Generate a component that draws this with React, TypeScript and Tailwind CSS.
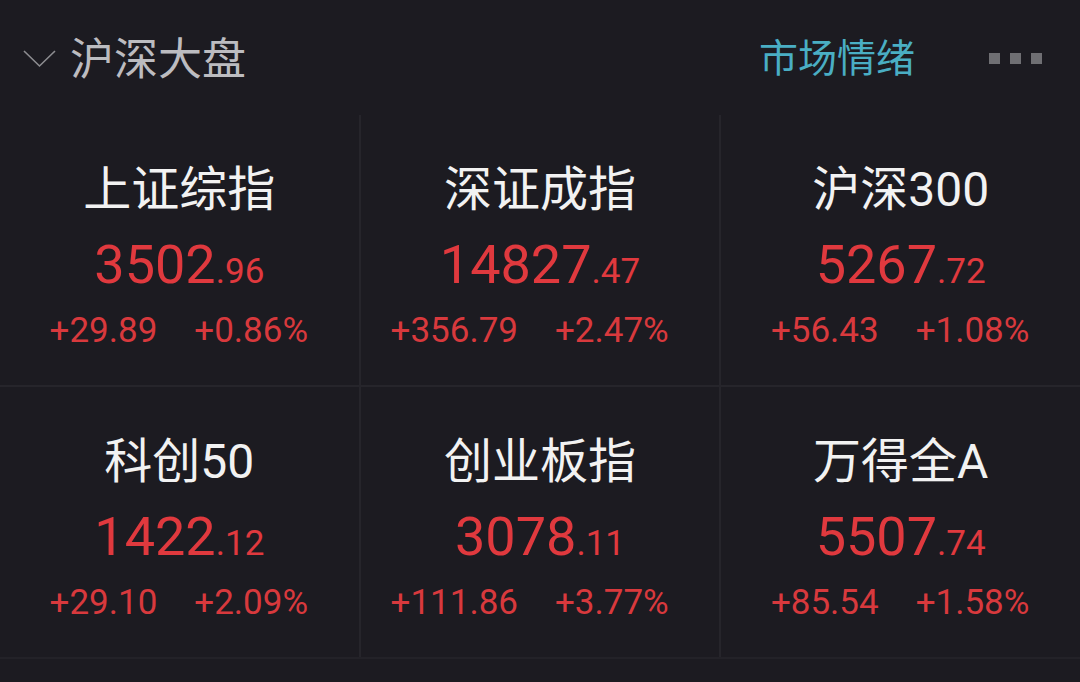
import React from "react";

interface IndexItem {
  name: string;
  whole: string;
  frac: string;
  change: string;
  pct: string;
}

const items: IndexItem[] = [
  { name: "上证综指", whole: "3502", frac: ".96", change: "+29.89", pct: "+0.86%" },
  { name: "深证成指", whole: "14827", frac: ".47", change: "+356.79", pct: "+2.47%" },
  { name: "沪深300", whole: "5267", frac: ".72", change: "+56.43", pct: "+1.08%" },
  { name: "科创50", whole: "1422", frac: ".12", change: "+29.10", pct: "+2.09%" },
  { name: "创业板指", whole: "3078", frac: ".11", change: "+111.86", pct: "+3.77%" },
  { name: "万得全A", whole: "5507", frac: ".74", change: "+85.54", pct: "+1.58%" },
];

const IndexCard: React.FC<{ item: IndexItem }> = ({ item }) => (
  <div className="bg-[#1c1b21] h-[270px] flex flex-col items-center pt-[47px]">
    <div className="text-[48px] leading-[56px] text-[#f2f2f2]">{item.name}</div>
    <div className="mt-[17px] flex items-baseline leading-[60px] text-[#e0393e]">
      <span className="text-[54px]">{item.whole}</span>
      <span className="text-[35px]">{item.frac}</span>
    </div>
    <div className="mt-[9px] w-full grid grid-cols-2 text-[35px] leading-[40px] text-[#d8393d]">
      <span className="text-right pr-[22px]">{item.change}</span>
      <span className="pl-[15px]">{item.pct}</span>
    </div>
  </div>
);

export default function App() {
  return (
    <div
      className="w-[1080px] h-[682px] bg-[#1c1b21] overflow-hidden"
      style={{ fontFamily: "Roboto, 'Noto Sans CJK SC', sans-serif" }}
    >
      <div className="h-[115px] flex items-center pl-[23px] pr-[38px] pt-[4px]">
        <svg width="33" height="18" viewBox="0 0 33 18" fill="none" className="-mt-[2px]">
          <path d="M1 1 L16.5 16 L32 1" stroke="#8c8c90" strokeWidth="1.6" />
        </svg>
        <div className="ml-[14px] text-[44px] text-[#bcbcc0]">沪深大盘</div>
        <div className="ml-auto text-[39px] text-[#4aaec4]">市场情绪</div>
        <div className="ml-[74px] -mt-[2px] flex gap-[10px]">
          <span className="w-[11px] h-[11px] bg-[#6f6f73]" />
          <span className="w-[11px] h-[11px] bg-[#6f6f73]" />
          <span className="w-[11px] h-[11px] bg-[#6f6f73]" />
        </div>
      </div>
      <div className="grid grid-cols-3 gap-[2px] bg-[#26252b] border-b-2 border-[#232228]">
        {items.map((it) => (
          <IndexCard key={it.name} item={it} />
        ))}
      </div>
    </div>
  );
}
